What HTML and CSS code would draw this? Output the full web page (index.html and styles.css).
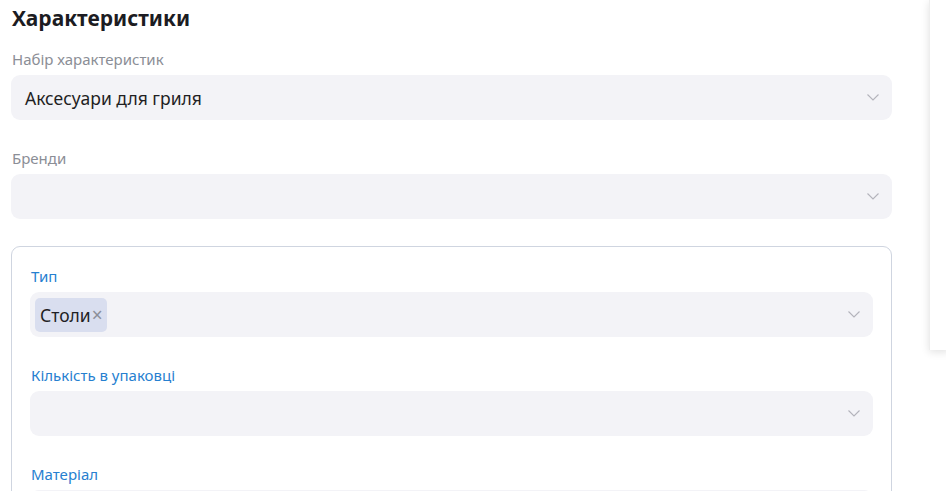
FILE: index.html
```html
<!DOCTYPE html>
<html lang="uk">
  <head>
    <meta charset="UTF-8" />
    <meta name="viewport" content="width=device-width, initial-scale=1.0" />
    <title>Характеристики</title>
    <link rel="stylesheet" href="styles.css">
  </head>
  <body>
    <div class="page">
      <div class="main">
        <h2 class="title">Характеристики</h2>

        <div class="field">
          <label class="label">Набір характеристик</label>
          <div class="select">
            <span class="value">Аксесуари для гриля</span>
            <svg class="chevron" width="12" height="7" viewBox="0 0 12 7"><path d="M0.5 0.5 L6 6 L11.5 0.5" fill="none" stroke="#b3b3bb" stroke-width="1.1"/></svg>
          </div>
        </div>

        <div class="field field-last">
          <label class="label">Бренди</label>
          <div class="select">
            <span class="value"></span>
            <svg class="chevron" width="12" height="7" viewBox="0 0 12 7"><path d="M0.5 0.5 L6 6 L11.5 0.5" fill="none" stroke="#b3b3bb" stroke-width="1.1"/></svg>
          </div>
        </div>

        <div class="card">
          <div class="field">
            <label class="label blue">Тип</label>
            <div class="select">
              <span class="tag">Столи<span class="tag-x">×</span></span>
              <svg class="chevron" width="12" height="7" viewBox="0 0 12 7"><path d="M0.5 0.5 L6 6 L11.5 0.5" fill="none" stroke="#b3b3bb" stroke-width="1.1"/></svg>
            </div>
          </div>

          <div class="field">
            <label class="label blue">Кількість в упаковці</label>
            <div class="select">
              <span class="value"></span>
              <svg class="chevron" width="12" height="7" viewBox="0 0 12 7"><path d="M0.5 0.5 L6 6 L11.5 0.5" fill="none" stroke="#b3b3bb" stroke-width="1.1"/></svg>
            </div>
          </div>

          <div class="field">
            <label class="label blue">Матеріал</label>
            <div class="select">
              <span class="value"></span>
              <svg class="chevron" width="12" height="7" viewBox="0 0 12 7"><path d="M0.5 0.5 L6 6 L11.5 0.5" fill="none" stroke="#b3b3bb" stroke-width="1.1"/></svg>
            </div>
          </div>
        </div>
      </div>

      <div class="side"></div>
    </div>
  </body>
</html>
```

FILE: styles.css
```css
body {
  margin: 0;
  font-family: "Noto Sans", "Open Sans", sans-serif;
  background: #fff;
  color: #1f1f24;
  overflow: hidden;
}
.page {
  display: flex;
  align-items: flex-start;
  height: 491px;
}
.main {
  flex-shrink: 0;
  width: 881px;
  margin-left: 11px;
}
.title {
  margin: 4px 0 19px 1px;
  font-size: 21px;
  line-height: 28px;
  font-weight: 700;
  color: #1c1c22;
}
.field {
  margin-bottom: 30px;
}
.field-last {
  margin-bottom: 27px;
}
.label {
  display: block;
  font-size: 15px;
  line-height: 16px;
  margin: 0 0 8px 1px;
  color: #8b8e96;
}
.label.blue {
  color: #2680d0;
}
.select {
  display: flex;
  align-items: center;
  justify-content: space-between;
  height: 45px;
  box-sizing: border-box;
  padding: 0 13px 0 14px;
  background: #f3f3f7;
  border-radius: 9px;
}
.value {
  font-size: 17.5px;
  color: #1f1f24;
}
.chevron {
  flex-shrink: 0;
}
.card .select {
  padding-left: 5px;
}
.tag {
  display: flex;
  align-items: center;
  height: 34px;
  padding: 0 4px 0 5px;
  background: #d9deef;
  border-radius: 5px;
  font-size: 17.5px;
  color: #1f1f24;
}
.tag-x {
  margin-left: 1px;
  font-size: 19px;
  color: #8c8f99;
}
.card {
  border: 1px solid #cfd5e0;
  border-radius: 9px;
  padding: 21px 18px 0 18px;
  height: 260px;
}
.side {
  flex-shrink: 0;
  width: 20px;
  height: 350px;
  margin-left: 37px;
  background: #fff;
  box-shadow: 0 2px 8px rgba(0, 0, 0, 0.12);
  border-left: 1px solid #eeeeee;
}
```
